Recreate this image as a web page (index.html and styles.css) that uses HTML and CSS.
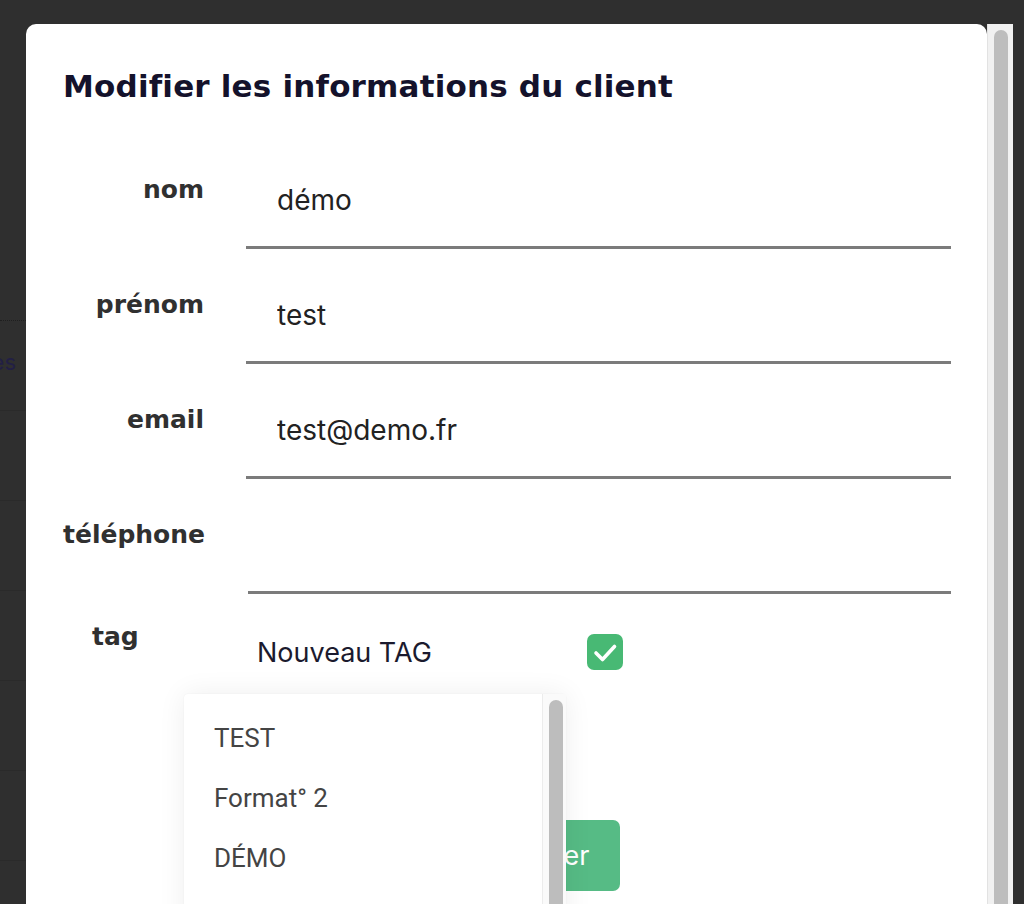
FILE: index.html
```html
<!DOCTYPE html>
<html lang="fr">
  <head>
    <meta charset="UTF-8" />
    <title>Modifier client</title>
    <link rel="stylesheet" href="styles.css">
  </head>
  <body>
    <div class="screen">
      <div class="page-edge">
        <div class="edge-row first"></div>
        <div class="edge-row"><span class="edge-text">Clientes</span></div>
        <div class="edge-row"></div>
        <div class="edge-row"></div>
        <div class="edge-row"></div>
        <div class="edge-row"></div>
        <div class="edge-row"></div>
      </div>

      <div class="modal">
        <h2 class="title">Modifier les informations du client</h2>

        <form class="form">
          <div class="field">
            <label for="nom">nom</label>
            <input id="nom" type="text" value="démo" />
          </div>
          <div class="field">
            <label for="prenom">prénom</label>
            <input id="prenom" type="text" value="test" />
          </div>
          <div class="field">
            <label for="email">email</label>
            <input id="email" type="text" value="test@demo.fr" />
          </div>
          <div class="field phone">
            <label for="tel">téléphone</label>
            <input id="tel" type="text" value="" />
          </div>
          <div class="field tag-row">
            <label class="tag-label">tag</label>
            <div class="tag-value">
              <span class="tag-name">Nouveau TAG</span>
              <span class="check">
                <svg width="36" height="36" viewBox="0 0 36 36">
                  <path d="M9 19 L15.5 25.5 L27.5 12.5" fill="none" stroke="#fff" stroke-width="3.6" stroke-linecap="round" stroke-linejoin="round" />
                </svg>
              </span>
            </div>
          </div>
          <div class="actions">
            <button type="button" class="save">Enregistrer</button>
          </div>
        </form>

        <div class="dropdown">
          <ul class="options">
            <li>TEST</li>
            <li>Format° 2</li>
            <li>DÉMO</li>
          </ul>
          <div class="mini-track"><div class="mini-thumb"></div></div>
        </div>
      </div>

      <div class="track"><div class="thumb"></div></div>
    </div>
  </body>
</html>
```

FILE: styles.css
```css
html, body {
  margin: 0;
  height: 904px;
  overflow: hidden;
}
body {
  background-color: #2f2f2f;
  font-family: Inter, "Noto Sans", sans-serif;
}
.screen {
  display: flex;
  height: 904px;
}

/* dimmed page behind the modal */
.page-edge {
  width: 26px;
  flex-shrink: 0;
  overflow: hidden;
}
.edge-row {
  height: 89px;
  border-bottom: 1px solid #2a2a2a;
  display: flex;
  align-items: center;
  justify-content: flex-end;
}
.edge-row.first {
  height: 320px;
  border-bottom: 1px dotted #1f1f1f;
}
.edge-text {
  color: #221f45;
  font-size: 22px;
  white-space: nowrap;
  padding-right: 10px;
  margin-top: -8px;
}

.modal {
  position: relative;
  width: 961px;
  flex-shrink: 0;
  margin-top: 24px;
  background-color: #ffffff;
  border-radius: 10px 10px 0 0;
  padding: 43px 36px 0 37px;
  box-sizing: border-box;
  overflow: hidden;
}
.title {
  margin: 0 0 48px 0;
  font-family: "DejaVu Sans", sans-serif;
  font-size: 31px;
  line-height: 38px;
  font-weight: 700;
  color: #14122b;
  letter-spacing: 0.18px;
  white-space: nowrap;
}

.form {
  display: flex;
  flex-direction: column;
  gap: 19px;
}
.field {
  display: grid;
  grid-template-columns: 141px 705px;
  column-gap: 42px;
}
.field label {
  text-align: right;
  font-family: "DejaVu Sans", sans-serif;
  font-size: 25px;
  line-height: 28px;
  font-weight: 700;
  color: #303030;
  padding-top: 23px;
  white-space: nowrap;
}
.field input {
  height: 96px;
  box-sizing: border-box;
  border: none;
  border-bottom: 3px solid #7b7b7b;
  padding: 0 0 0 31px;
  font-family: Inter, "Noto Sans", sans-serif;
  font-size: 28px;
  color: #222222;
  outline: none;
  background: transparent;
}
.phone input {
  margin-left: 2px;
}

.tag-row label.tag-label {
  text-align: left;
  padding-top: 10px;
  padding-left: 29px;
}
.tag-value {
  display: flex;
  align-items: center;
  padding: 19px 0 0 11px;
  height: 40px;
}
.tag-name {
  width: 330px;
  font-size: 27px;
  color: #1b1a2e;
}
.check {
  width: 36px;
  height: 36px;
  border-radius: 7px;
  background-color: #48b974;
  display: flex;
}

.actions {
  margin-top: 129px;
  padding-left: 356px;
}
.save {
  height: 71px;
  padding: 0 31px;
  border: none;
  border-radius: 7px;
  background-color: #56bb85;
  color: #ffffff;
  font-family: Inter, "Noto Sans", sans-serif;
  font-size: 27px;
}

/* tag suggestions menu */
.dropdown {
  position: absolute;
  left: 158px;
  top: 670px;
  width: 382px;
  height: 260px;
  background-color: #ffffff;
  border-radius: 4px 4px 0 0;
  box-shadow: 0 0 28px rgba(0, 0, 0, 0.07), 0 0 2px rgba(0, 0, 0, 0.06);
  display: flex;
}
.options {
  list-style: none;
  margin: 0;
  padding: 14px 0 0 30px;
  flex: 1;
}
.options li {
  height: 60px;
  line-height: 60px;
  font-size: 26px;
  color: #444444;
  font-family: Roboto, Inter, sans-serif;
}
.mini-track {
  width: 24px;
  border-left: 1px solid #ececec;
  background-color: #fafafa;
  padding: 6px 0 0 6px;
  box-sizing: border-box;
}
.mini-thumb {
  width: 14px;
  height: 240px;
  border-radius: 7px;
  background-color: #bdbdbd;
}

/* outer scrollbar */
.track {
  width: 26px;
  margin-top: 24px;
  background-color: #f1f1f1;
  border-left: 1px solid #e2e2e2;
  padding: 6px 0 0 6px;
  box-sizing: border-box;
}
.thumb {
  width: 14px;
  height: 900px;
  border-radius: 7px;
  background-color: #bdbdbd;
}
```
